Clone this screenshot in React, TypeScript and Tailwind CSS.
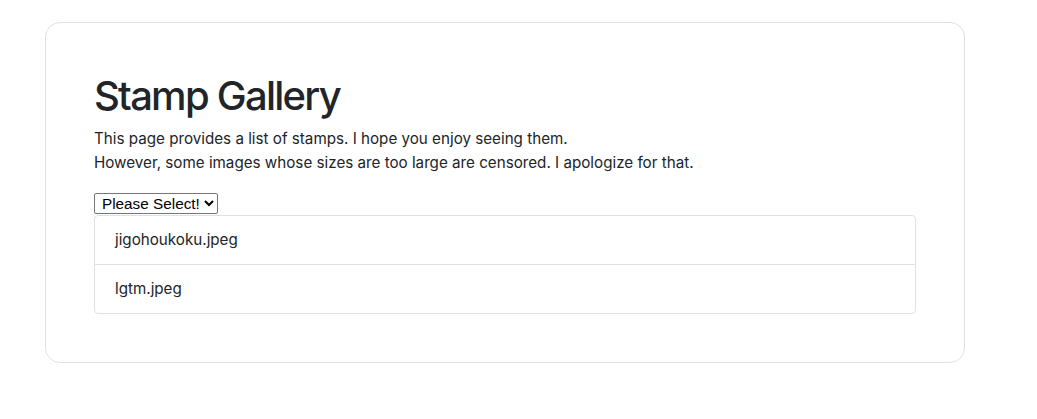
export default function App() {
  return (
    <div className="min-h-[419px] bg-white pt-[22px] pl-[45px] text-[#212529]" style={{ fontFamily: 'Inter, "Noto Sans", sans-serif' }}>
      <div className="w-[920px] rounded-[15px] border border-[#dee2e6] p-12">
        <h1 className="mb-2 pt-[1px] text-[40px] font-medium leading-[47px] tracking-[-1.75px]">Stamp Gallery</h1>
        <p className="mb-4 text-[15.2px] leading-6">
          This page provides a list of stamps. I hope you enjoy seeing them.
          <br />
          However, some images whose sizes are too large are censored. I apologize for that.
        </p>
        <select className="mt-[2px] h-[21px] rounded-[2px] border border-[#767676] bg-white pl-[3px] pr-[1px] text-[15.3px] leading-[19px] text-black" style={{ fontFamily: '"Liberation Sans", Arial, sans-serif' }}>
          <option>Please Select!</option>
        </select>
        <ul className="rounded-[4px] border border-[#dee2e6] text-[15.2px]">
          <li className="border-b border-[#dee2e6] px-5 py-3 leading-6">jigohoukoku.jpeg</li>
          <li className="px-5 py-3 leading-6">lgtm.jpeg</li>
        </ul>
      </div>
    </div>
  );
}
